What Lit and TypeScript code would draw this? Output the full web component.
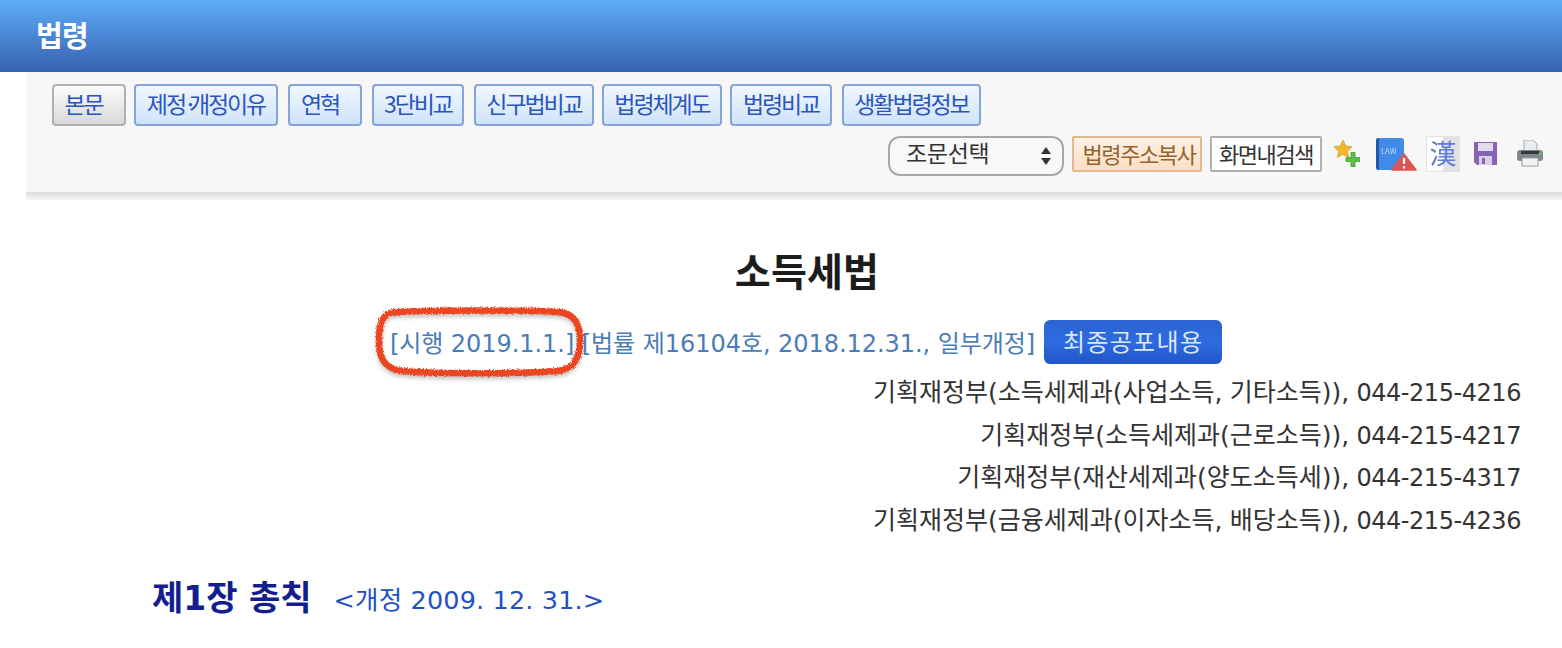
import { LitElement, html, css, svg } from "lit";
import { customElement } from "lit/decorators.js";

const tabs: { t: string; w: number; gap: number; on?: boolean; shift?: boolean }[] = [
  { t: "본문", w: 74, gap: 0, on: true },
  { t: "제정·개정이유", w: 144, gap: 8 },
  { t: "연혁", w: 74, gap: 10, shift: true },
  { t: "3단비교", w: 92, gap: 10 },
  { t: "신구법비교", w: 120, gap: 10 },
  { t: "법령체계도", w: 120, gap: 8 },
  { t: "법령비교", w: 102, gap: 8 },
  { t: "생활법령정보", w: 139, gap: 10 },
];
const agencies = [
  "기획재정부(소득세제과(사업소득, 기타소득)), 044-215-4216",
  "기획재정부(소득세제과(근로소득)), 044-215-4217",
  "기획재정부(재산세제과(양도소득세)), 044-215-4317",
  "기획재정부(금융세제과(이자소득, 배당소득)), 044-215-4236",
];
// Hangul runs and their punctuation are set slightly larger than the Latin text around them.
const mixed = (s: string) =>
  s.split(/([가-힣(),]+)/).map((p, i) => (i % 2 ? html`<span class="k">${p}</span>` : p));
const tabLabel = (s: string) => {
  const [a, b] = s.split("·");
  return b === undefined ? s : html`${a}<span class="dot">·</span>${b}`;
};

const RING = "M30 12 C70 10 165 10 192 12 C207 13 214 22 214 40 C214 58 208 69 192 71 C150 74 70 74 36 71 C20 69 13 60 13 42 C13 22 16 13 30 12Z";

@customElement("app-root")
export class AppRoot extends LitElement {
  static styles = css`
    :host { display: block; width: 1562px; height: 648px; overflow: hidden; background: #fff; position: relative;
      font-family: "DejaVu Sans", "Noto Sans CJK KR", sans-serif; }
    .top { height: 72px; background: linear-gradient(#5eacf7, #3561b0); display: flex; align-items: center; padding: 0 0 4px 36px; box-sizing: border-box; }
    .top h1 { margin: 0; color: #fff; font: 700 29px/1 "Noto Sans CJK KR", sans-serif; letter-spacing: -.8px; }
    .bar { margin-left: 26px; height: 120px; box-sizing: border-box; background: #f7f7f7; padding: 12px 18px 0 26px; display: flex; flex-direction: column; gap: 10px; }
    .under { margin-left: 26px; height: 8px; background: linear-gradient(#dcdcdc, #f6f6f6); }
    .tabs { display: flex; }
    .tab { height: 42px; box-sizing: border-box; border: 2px solid #86a4dc; border-radius: 4px; background: linear-gradient(#f0f7fe, #cfe4f9);
      color: #2b55bd; font: 400 23px/34px "Noto Sans CJK KR", sans-serif; letter-spacing: -2.1px; text-align: center; }
    .tab.on { border-color: #b0b0b0; background: linear-gradient(#fbfbfb, #d9d9d9); padding-right: 11px; }
    .tab.shift { padding-right: 10px; }
    .dot { letter-spacing: -8px; margin-left: -1px; }
    .tools { display: flex; justify-content: flex-end; align-items: flex-start; }
    .select { width: 176px; height: 40px; box-sizing: border-box; border: 2px solid #a8a8a8; border-radius: 12px; background: #f8f8f8; color: #333;
      font: 400 23px/28px "Noto Sans CJK KR", sans-serif; padding-left: 16px; display: flex; justify-content: space-between; letter-spacing: -.3px; }
    .select svg { margin: 6px 10px 0 0; }
    .btn { height: 36px; box-sizing: border-box; border: 2px solid #e3b88c; background: linear-gradient(#fdf0e4, #fbdfc6); color: #94632a; margin-left: 8px;
      border-radius: 2px; font: 400 22px/30px "Noto Sans CJK KR", sans-serif; letter-spacing: -1.4px; text-align: center; width: 130px; padding-left: 4px; }
    .btn.find { border-color: #b0b0b0; background: #fff; color: #333; width: 112px; padding-left: 0; }
    .icons { display: flex; align-items: flex-start; width: 222px; }
    .icons svg { display: block; flex: none; filter: blur(.7px); }
    .icons svg text { font-family: "Noto Sans CJK KR", sans-serif; }
    .han { flex: none; width: 34px; height: 36px; box-sizing: border-box; border: 1px solid #e2e2e2; background: linear-gradient(90deg, #fff 50%, #e2e2e2 50%);
      color: #5f7ad8; font: 400 27px/32px "Noto Sans CJK KR", sans-serif; text-align: center; filter: blur(.5px); margin-left: 9px; }
    .i1 { margin: 3px 0 0 12px; } .i2 { margin: 2px 0 0 16px; } .i4 { margin: 6px 0 0 14px; } .i5 { margin: 4px 0 0 20px; }
    .main { display: flex; flex-direction: column; }
    .title { margin: 41px 0 0; text-align: center; color: #1c1c1c; font: 700 39px/56px "Noto Sans CJK KR", sans-serif; padding-left: 52px; letter-spacing: .2px; }
    .date { display: flex; justify-content: center; align-items: center; height: 46px; margin-top: 21px; padding-left: 50px; color: #4a7cb8; font-size: 24px; letter-spacing: -.05px; }
    .date b { font: 400 24px/1 "Noto Sans CJK KR", sans-serif; color: #dbe8fa; width: 178px; height: 44px; line-height: 42px; text-align: center; margin: 2px 0 0 9px; border-radius: 6px;
      background: linear-gradient(#2a64d0, #2f6be0 50%, #1f55c8); letter-spacing: 1.3px; }
    .agency { margin: 8px 41px 0 0; text-align: right; color: #333; font-size: 24px; line-height: 42.7px; letter-spacing: -.45px; }
    .k { font-size: 25px; letter-spacing: 0; }
    .chap { margin: 33px 0 0 152px; display: flex; align-items: center; }
    .chap strong { font: 700 33px/44px "DejaVu Sans", "Noto Sans CJK KR", sans-serif; color: #141e8e; }
    .chap strong .k { font-size: 34px; }
    .chap span.note { margin-left: 22px; font-size: 25.5px; line-height: 44px; padding-top: 2px; color: #2251c6; letter-spacing: .15px; }
    .mark { position: absolute; left: 366px; top: 300px; pointer-events: none; }
  `;

  render() {
    return html`
      <div class="top"><h1>법령</h1></div>
      <div class="bar">
        <div class="tabs">
          ${tabs.map((b) => html`<div class="tab ${b.on ? "on" : ""} ${b.shift ? "shift" : ""}" style="width:${b.w}px;margin-left:${b.gap}px">${tabLabel(b.t)}</div>`)}
        </div>
        <div class="tools">
          <div class="select">조문선택
            <svg width="12" height="24" viewBox="0 0 12 24"><path d="M6 3 11 10H1zM6 21 1 14H11z" fill="#333"/></svg>
          </div>
          <div class="btn">법령주소복사</div>
          <div class="btn find">화면내검색</div>
          <div class="icons">
            <svg class="i1" width="26" height="28" viewBox="0 0 26 28">
              <path d="M9 1l2.800 6 6.200.8-4.500 4.400 1.200 6.300L9 15.500 3.300 18.500l1.200-6.300L0 7.800l6.200-.8z" fill="#f2b92c" stroke="#d0a040" stroke-width=".8"/>
              <path d="M12 18.500h5v-5h4v5h5v4h-5v5h-4v-5h-5z" fill="#62bd48" stroke="#3f9a35" stroke-width=".8"/>
            </svg>
            <svg class="i2" width="41" height="33" viewBox="0 0 41 33">
              <path d="M0 3a3 3 0 0 1 3-3h22a3 3 0 0 1 3 3v29H3a3 3 0 0 1-3-3z" fill="#4389e8"/>
              <path d="M0 3a3 3 0 0 1 3-3v32a3 3 0 0 1-3-3z" fill="#2257a8"/>
              <text x="5" y="16" font-size="7.500" fill="#c5dbf8">LAW</text>
              <path d="M28 16 40 32H16z" fill="#dc5552" stroke="#dc5552" stroke-width="1.500" stroke-linejoin="round"/>
              <path d="M28 20v6M28 28v2.500" stroke="#fff" stroke-width="2.200"/>
            </svg>
            <div class="han">漢</div>
            <svg class="i4" width="23" height="23" viewBox="0 0 23 23">
              <path d="M0 0H23V23H3L0 20z" fill="#8a62b4"/>
              <rect x="4" y="1" width="15" height="8" fill="#e2daee"/>
              <rect x="5" y="14" width="13" height="9" fill="#d9d0e6"/><rect x="8" y="16" width="3" height="6" fill="#8a62b4"/>
            </svg>
            <svg class="i5" width="26" height="27" viewBox="0 0 26 27">
              <path d="M7 0h9l4 4v9H7z" fill="#e9ecef" stroke="#a8adb2"/>
              <rect x="0" y="10" width="26" height="11" rx="3" fill="#7f8789"/>
              <rect x="4" y="11" width="18" height="3" fill="#33383a"/>
              <circle cx="23" cy="14" r="1.200" fill="#5fd05f"/>
              <rect x="5" y="18" width="16" height="8" fill="#f2f3f4" stroke="#9aa0a4"/>
            </svg>
          </div>
        </div>
      </div>
      <div class="under"></div>
      <div class="main">
        <div class="title">소득세법</div>
        <div class="date"><span>[시행 2019.1.1.] [법률 제16104호, 2018.12.31., 일부개정]</span><b>최종공포내용</b></div>
        <div class="agency">${agencies.map((a) => html`<div>${mixed(a)}</div>`)}</div>
        <div class="chap"><strong>${mixed("제1장 총칙")}</strong><span class="note">&lt;개정 2009. 12. 31.&gt;</span></div>
      </div>
      <svg class="mark" width="230" height="90" viewBox="0 0 230 90">
        <defs><filter id="rough" x="-10%" y="-20%" width="120%" height="140%">
          <feTurbulence type="fractalNoise" baseFrequency=".8" numOctaves="2" seed="4"/>
          <feDisplacementMap in="SourceGraphic" scale="4"/>
        </filter><filter id="soft"><feGaussianBlur stdDeviation="2"/></filter></defs>
        ${svg`<path d="${RING}" fill="none" stroke="#888" stroke-opacity=".5" stroke-width="6" filter="url(#soft)" transform="translate(0 3)"/>
        <path d="${RING}" fill="none" stroke="#ec4523" stroke-width="6.500" filter="url(#rough)"/>`}
      </svg>
    `;
  }
}
